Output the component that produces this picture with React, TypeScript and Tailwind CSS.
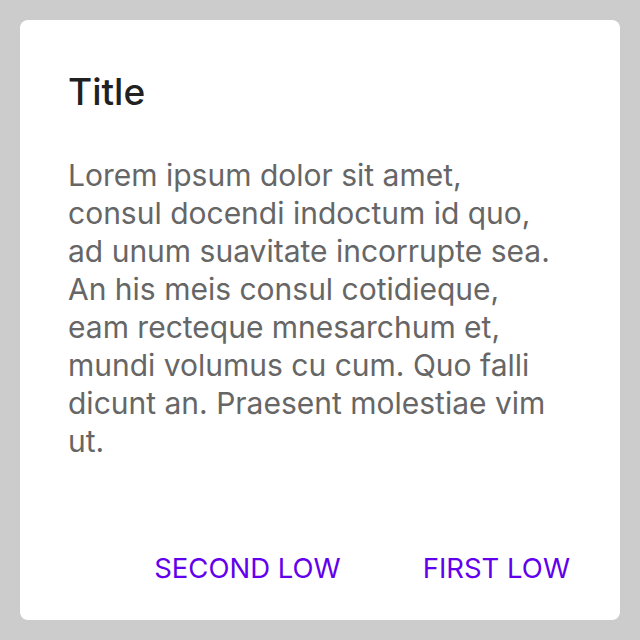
export default function App() {
  return (
    <div className="w-[640px] h-[640px] bg-[#cccccc] p-5" style={{ fontFamily: "Inter, 'Noto Sans', sans-serif" }}>
      <div className="h-full bg-white rounded-lg flex flex-col">
        <div className="px-12 pt-[50px]">
          <h2 className="text-[37px] leading-[44px] text-[#212121] font-medium">Title</h2>
        </div>
        <p className="ml-12 w-[492px] mt-[42px] text-[30px] leading-[38px] text-[#666666]">
          Lorem ipsum dolor sit amet, consul docendi indoctum id quo, ad unum suavitate incorrupte sea. An his meis
          consul cotidieque, eam recteque mnesarchum et, mundi volumus cu cum. Quo falli dicunt an. Praesent molestiae
          vim ut.
        </p>
        <div className="mt-auto flex justify-end items-center gap-[82px] pr-[50px] pb-[36px]">
          <button className="text-[27.5px] leading-[32px] text-[#6200ee] uppercase">Second low</button>
          <button className="text-[27.5px] leading-[32px] text-[#6200ee] uppercase">First low</button>
        </div>
      </div>
    </div>
  );
}
